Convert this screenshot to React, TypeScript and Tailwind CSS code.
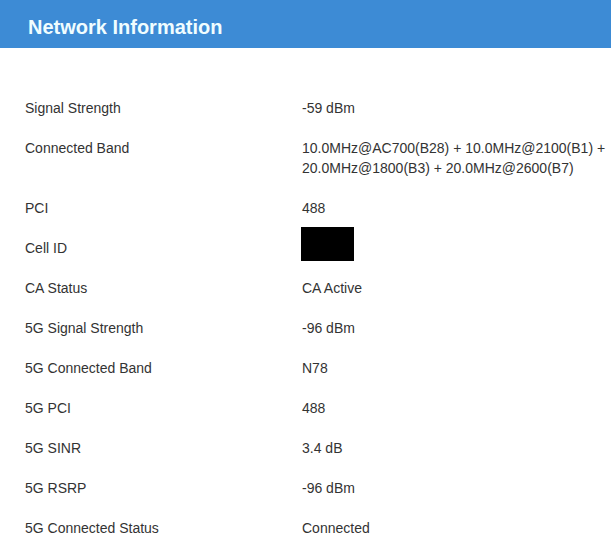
import React from "react";

type Row = {
  label: string;
  value: React.ReactNode;
};

const rows: Row[] = [
  { label: "Signal Strength", value: "-59 dBm" },
  {
    label: "Connected Band",
    value: (
      <>
        10.0MHz@AC700(B28) + 10.0MHz@2100(B1) +
        <br />
        20.0MHz@1800(B3) + 20.0MHz@2600(B7)
      </>
    ),
  },
  { label: "PCI", value: "488" },
  {
    label: "Cell ID",
    value: (
      <span className="relative block h-5">
        <span className="absolute left-[-1px] top-[-11px] h-[34px] w-[53px] bg-black" />
      </span>
    ),
  },
  { label: "CA Status", value: "CA Active" },
  { label: "5G Signal Strength", value: "-96 dBm" },
  { label: "5G Connected Band", value: "N78" },
  { label: "5G PCI", value: "488" },
  { label: "5G SINR", value: "3.4 dB" },
  { label: "5G RSRP", value: "-96 dBm" },
  { label: "5G Connected Status", value: "Connected" },
];

export default function App() {
  return (
    <div className="h-[551px] w-[611px] overflow-hidden bg-white font-['Liberation_Sans',Arial,sans-serif]">
      <div className="flex h-[48px] items-center bg-[#3d8bd5] pl-[28px] pt-[6px]">
        <h1 className="text-[20px] font-bold leading-[24px] text-[#f0fdff]">Network Information</h1>
      </div>
      <div className="pt-[40px]">
        {rows.map((row) => (
          <div key={row.label} className="flex py-[10px] text-[14px] leading-[20px] text-[#333]">
            <div className="w-[302px] pl-[25px]">{row.label}</div>
            <div className="flex-1 whitespace-nowrap">{row.value}</div>
          </div>
        ))}
      </div>
    </div>
  );
}
